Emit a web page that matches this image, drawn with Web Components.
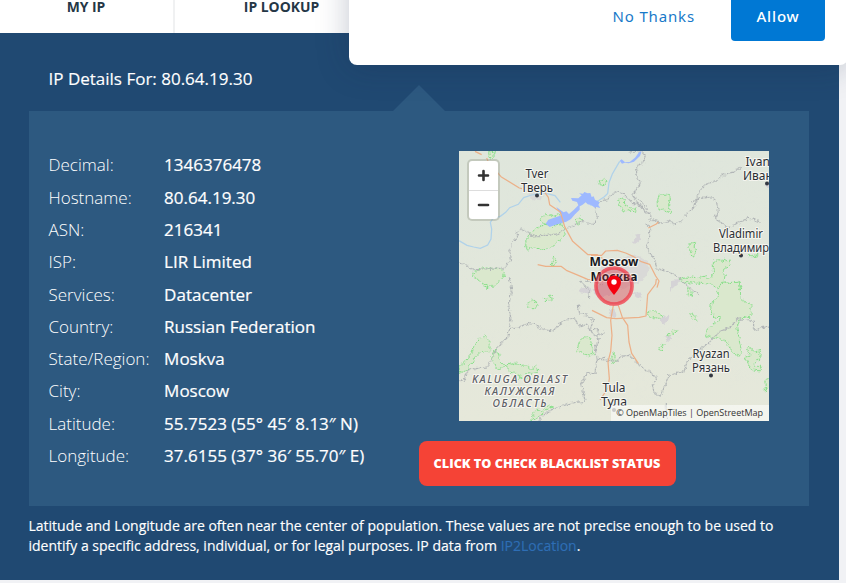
<!DOCTYPE html>
<html lang="en">
<head>
<meta charset="utf-8">
<title>IP Details</title>
<style>
html,body{margin:0;padding:0}
body{width:846px;height:583px;overflow:hidden;background:#f1f2f5;font-family:"Open Sans","Noto Sans",sans-serif}
</style>
</head>
<body>
<ip-page></ip-page>
<script>
const define = (name, html) => customElements.define(name, class extends HTMLElement {
  constructor() {
    super();
    const t = document.createElement('template');
    t.innerHTML = html;
    this.attachShadow({mode: 'open'}).append(t.content.cloneNode(true));
  }
});

define('nav-tabs', `
<style>
:host{display:flex;height:33px;width:839px;background:#fff;color:#253746;font-size:13.9px;font-weight:700;line-height:14px}
.t{box-sizing:border-box;text-align:center;width:175px;padding-right:1px;border-right:2px solid #f0f1f2}
.t.b{width:214px;border:0}
</style>
<div class="t">MY IP</div><div class="t b">IP LOOKUP</div>`);

define('permission-prompt', `
<style>
:host{position:absolute;left:349px;top:-60px;width:499px;height:125px;box-sizing:border-box;background:#fff;border-radius:8px;box-shadow:0 2px 32px rgba(25,40,75,.26);display:flex;justify-content:flex-end;align-items:flex-end;padding:0 23px 24px 0;gap:36px;font-family:"Noto Sans",sans-serif;font-size:15px;color:#1879c9;letter-spacing:.85px}
span{line-height:49px;white-space:nowrap}
b{display:block;width:94px;height:70px;box-sizing:border-box;padding-top:21px;line-height:49px;text-align:center;background:#0078d4;color:#fff;border-radius:4px;font-weight:500}
</style>
<span>No Thanks</span><b>Allow</b>`);

define('detail-row', `
<style>
:host{display:flex;height:32.3px;line-height:32.3px;font-size:17px;white-space:nowrap;color:#fff}
.k{width:115.6px;font-weight:300}
.v{font-weight:450;-webkit-text-stroke:.2px #fff}
</style>
<span class="k"><slot name="k"></slot></span><span class="v"><slot></slot></span>`);

define('check-button', `
<style>
:host{display:flex;box-sizing:border-box;align-items:center;justify-content:center;width:257px;height:45px;padding:0 1px 2px 0;border-radius:8px;background:#f54336;color:#fff;font-size:12.7px;font-weight:800;white-space:nowrap}
</style>
<span><slot></slot></span>`);

define('region-map', `
<style>
:host{display:block;width:310px;height:270px;position:relative;overflow:hidden;background:#e3e8dc}
svg{display:block}
.z{position:absolute;left:8px;top:8px;width:29px;border:2px solid rgba(150,155,140,.38);background-clip:padding-box;background-color:#fff;border-radius:5px}
.z svg:first-child{border-bottom:1px solid #ddd}
.a{position:absolute;right:0;bottom:0;height:16px;line-height:15px;padding:0 6px 0 5px;background:rgba(255,255,255,.55);color:#333;font-size:9px;white-space:nowrap}
.border{fill:none;stroke:#b2b6b7;stroke-width:3.6;stroke-dasharray:8 1.5 3 1.5}
.park{fill:#dae8cd;stroke:#7cde7f;stroke-width:2.7;stroke-dasharray:6 2}
.road{fill:none;stroke:#ecb088;stroke-width:3.7;stroke-linejoin:round}
.river{fill:none;stroke:#b0d2ea;stroke-width:3.8}
.town{fill:#d5d3d6}
text{font-family:"Noto Sans","Open Sans",sans-serif;font-size:12px;font-weight:450;fill:#2c2f35;text-anchor:middle;paint-order:stroke;stroke:#f5f5ef;stroke-width:2.2px;stroke-linejoin:round}
.obl text{font-size:10.5px;font-weight:500;fill:#5d6066}
</style>
<svg width="310" height="270" viewBox="459 151 310 270">
<defs>
<linearGradient id="bg" x2="0" y2="1"><stop offset="0" stop-color="#dfe6dc"/><stop offset=".5" stop-color="#e2e7db"/><stop offset="1" stop-color="#e6e8da"/></linearGradient>
<filter id="wob" color-interpolation-filters="sRGB" filterUnits="userSpaceOnUse" x="450" y="140" width="330" height="290"><feTurbulence type="fractalNoise" baseFrequency=".25" numOctaves="2" seed="4"/><feDisplacementMap in="SourceGraphic" scale="5" xChannelSelector="R" yChannelSelector="G"/></filter>
<filter id="shade" x="0" y="0" width="1" height="1"><feTurbulence type="fractalNoise" baseFrequency=".018 .026" numOctaves="4" seed="9"/><feColorMatrix values="0 0 0 0 .72  0 0 0 0 .77  0 0 0 0 .71  .7 0 0 0 -.26"/></filter>
</defs>
<rect x="459" y="151" width="310" height="270" fill="url(#bg)"/>
<rect x="459" y="151" width="310" height="270" filter="url(#shade)" opacity=".15"/>
<g filter="url(#wob)">
 <g transform="translate(455 148) scale(.33333)">
  <path class="town" d="M218 140l20-10 28 10-10 17-28-4zM500 330l40-10 35 18 8 30-20 30-60 25-60-20-10-40 30-30z" opacity=".7"/><path class="town" d="M545 258l12-3 3 18-14 13-10-5zM650 395l25-5-5 18-25 22zM930 110l18-15v30z" transform="translate(-2 2)"/>
  <path class="park" d="M102 12l20-3-5 14-5 9-10-6zM256 214l14-15 28 5 16-5 8 26-28 10-32-10zM245 240l28-12 22-2 30 6 6 22-6 15-28 22-22 14-48-6-8 8-10-22 12-24zM360 212l18-5 5 10-15 13zM432 100l12-7 12 8-8 8-12 2zM288 350l10-26 5 18-10 14zM57 374l20-15 50 3 22 5-3 20-25 25-30 8-20-24-15-10zM488 155l18-8 4 22 16 10 18 2-2 12-20-8-18 7-10-20zM614 138l26 1 5 18-5 20 10 15-3 5-22-14-16 3-3-20zM707 285l15-2-6 18 8 2-8 24-10-7 2-15-12-4 8-7zM775 341l12-6 30 3 12-2-10 22-18 8 10 12-4 22 16 4 32 0 5 20H790l-22-16-30-2-50-2-15-9 30-9 22 3 22-4 16 6 12-14z M880 320l12 2 18-2-10 6-20 0z"/>
  <path class="border" d="M12 342l18 6 26 18 25-3 45-3 20 3 10-18 14-10-6-23 5-22 20-26-5-12 20-10 26 22 35-2 14 0 30-5 18-12 20-8 22-12 15-5 30 10 14-18-5-18-3-22 18-14 20-3 20-24 28 6 28 30 14 0 10 12 30 23-4 23 12-12 20 13 25-8 18 10 18-8 22-25 20-20 6-25 10-22 20-20 30-10 20-18 30-8 22-14M712 162l20-13 28-4 24 13 6 32-10 20 20 12 18 20 28-16 34-16 38 12M524 12l30-4 17 10-3 22-22 14-2 26 10 30-20 30 8 20 20 20 14 16M570 225l14 13 0 30-10 28 24 38 8 28 34 10 30 14 8 12 28 22 28 20M533 145l25 16 20 24"/>
 </g>
 <g transform="translate(455 284) scale(.33333)">
  <path class="town" d="M370 15l34-8 6 17-8 5-28-5zM412 20l30-25 20 5 10 30-40 10zM462 75l16 0 6 20-14 8zM616 100l27-5-2 14-16 17-10-16zM628 158l20-5 4 10-14 12zM536 24l18 2 6 20-18-6z"/>
  <path class="park" d="M82 0l18 2-5 12zM220 57l10-10 14 6 2 18-14 4-14-4zM268 43l20-10 4 18-12-5-8 8zM12 247l22-13 18-36 18-33 20-9 16 18-2 30-30 2-18 20-18 32-25 10zM110 220l10-22 12 15 0 15 18 18-18 8-12-6zM156 242l30-5 14 10 18-2 12 10 12-14 8 22-14 8-24-2 8 14-30 0 6-12-30-6-12-20zM370 182l14-20 20-2 14 52-28 0-24-12zM230 389l18-14 12 5 20-15 12 5-22 9-14 16-14 10-12 5 4-14zM472 210l8-5 0 30-10 3zM580 83l14-5 12 7 18 9-5 10-18-3-16 1zM704 92l8-5 10 10 4 13-10-5zM638 150l20-14 10 6-12 6-18 10zM612 190l12-10-2 16-10 2zM698 10l8 4 4 22-10 3z"/>
  <path class="park" d="M800-5h54l4 50 30 16 0 35-20 4-12 5-10 25 10 54 6 18-10 16-20-11-4-14-15-20-20-12-18 2-18-5-6-10 6-13 34-25 5-8-22-5-8-20 6-24 18-12-4-20zM872 193l14-4 8 16 22-6-2 28-12 4-4 16 22 0-2 14-32-4-10-28-6-10 18-3zM930 290l14-10 8 20-14 12-7 12z"/>
  <path class="border" d="M163-20l8 40-10 44 7 40-5 29-4 26-30 28-10 20-10 22-14 20-32 5-22 0-14 35-20 6M163 133l25 0 32-15 22 5 24 14 28 4 18-20 25-14 20-6 18 28 20-8 20 30 18 14-14 25 8 35 24 3 32 4 14-15 25-3 18 12 8 12 22 20 24 10 12 22-14 12 6 27 20 8 10-30 14-34 28-6 18-4 8-30 24-24 16-14 20-12 20-22 20-20 32-14 20-23 24 3 12 0 14 8-4 24 60-16M370 65l4 25 22 3 20 18-12 26 26 0-2 17 22-10M450 220l-24 4-6 44-24 0-16 30 10 54-40 5-60 20-30 18-8 20M440 5l-20-12-30-4M634 360l0 45M373-10l28 25 3 26"/>
 </g>
</g>
<g transform="translate(455 148) scale(.33333)">
  <path class="river" d="M12 278l24 14 20 5 20 4 22-10 10-18 2-30-4-20 8-12 22-6 16-12 12-14 26-10 16-20 24-8 36-6 34 8 16 20M406 172l24-14 18-12 10-10 4-32 10-26 22-38"/>
  <path d="M272 227l8-12 24-8 16-5-8-10-8-15 12 9 10 7 8-3 8 8 14-12 14-14-4-10-14-4-4-8 22 1 10-9-8-6 12 1 4-5 10 4 8-1 4 12 6-2 4 10 14 8-4 8 6 9-12-3-4 2-12-8-10-2-6-6-10 8-8 4 0 10-14 14-12 14-14 8-14 4-20 6-16 6z" fill="#9eb9ff"/>
  <path d="M494 38l6-4 10 9 14-1 16-13 12-16 8-3-5 14-18 17-16 5-12-2-8 3z" fill="#9eb9ff"/>
</g>
<g transform="translate(455 148) scale(.33333)" class="road">
 <path d="M80 20l-20-10M95 30l5 12 38 44 55 34 8 2M270 134l10 14 4 22 32 22 13 44 24 44 46 40 28 0 8 6 20 14M408 322l32 0 12-13 35-2 25 8 22 10 25 16 25 8 18 35 10 15-6 20M248 350l24 5 46 0 16 12 36 15 28 12 60 7M580 240l24-12 6-6"/>
</g>
<g transform="translate(455 284) scale(.33333)" class="road">
 <path d="M604-15l-2 15-24 32-5 64-20 4-70 4-28-3-24-12-20-10M475 64l-8 45 4 45-4 48-8 32 4 50-4 28-24 36M490 64l12 36 16 24 4 50 8 34 20 30"/>
</g>
<circle cx="614" cy="286" r="18" fill="#d94a55" fill-opacity=".26" stroke="#f14450" stroke-opacity=".55" stroke-width="3.5"/>
<text x="614" y="266" textLength="49" lengthAdjust="spacingAndGlyphs" style="font-weight:700;fill:#17191d">Moscow</text>
<text x="614" y="281" textLength="47" lengthAdjust="spacingAndGlyphs" style="font-weight:700;fill:#17191d">Москва</text>
<circle cx="614" cy="286" r="18" fill="#d94050" fill-opacity=".24" stroke="#f14450" stroke-opacity=".55" stroke-width="3.5"/>
<path d="M614 295q-7-8-7-12.500a7 7 0 0 1 14 0q0 4.500-7 12.500z" fill="#f5000e"/><circle cx="614" cy="282" r="2.7" fill="#fff"/>
<g fill="#333842"><circle cx="537" cy="195.500" r="2"/><circle cx="767" cy="183.500" r="2"/><circle cx="741" cy="255.500" r="2"/><circle cx="711" cy="375.500" r="2"/></g><circle cx="614" cy="410" r="2" fill="#888"/>
<text x="537" y="178" textLength="23" lengthAdjust="spacingAndGlyphs">Tver</text>
<text x="537" y="192" textLength="32" lengthAdjust="spacingAndGlyphs">Тверь</text>
<text x="745.5" y="166" style="text-anchor:start">Ivanovo</text>
<text x="743" y="180" style="text-anchor:start">Иваново</text>
<text x="741" y="238" textLength="44" lengthAdjust="spacingAndGlyphs">Vladimir</text>
<text x="741" y="252" textLength="56" lengthAdjust="spacingAndGlyphs">Владимир</text>
<text x="711" y="358" textLength="37" lengthAdjust="spacingAndGlyphs">Ryazan</text>
<text x="711" y="372" textLength="38" lengthAdjust="spacingAndGlyphs">Рязань</text>
<text x="614" y="392" textLength="23" lengthAdjust="spacingAndGlyphs">Tula</text>
<text x="614" y="406" textLength="26" lengthAdjust="spacingAndGlyphs">Тула</text>
<g class="obl" font-style="italic"><text x="519.5" y="382.500" textLength="95">KALUGA OBLAST</text>
<text x="519.5" y="394.500" textLength="70">КАЛУЖСКАЯ</text>
<text x="519.5" y="406.500" textLength="54">ОБЛАСТЬ</text></g>
</svg>
<div class="z"><svg width="29" height="29" viewBox="0 0 29 29"><path d="M14.5 10v9M10 14.500h9" stroke="#333" stroke-width="2.600" stroke-linecap="round"/></svg><svg width="29" height="28" viewBox="0 0 29 28"><path d="M10 14h9" stroke="#333" stroke-width="2.600" stroke-linecap="round"/></svg></div>
<div class="a">© OpenMapTiles | OpenStreetMap</div>`);

define('ip-page', `
<style>
:host{display:block;width:846px;height:583px;position:relative;overflow:hidden}
main{box-sizing:border-box;width:839px;height:547px;background:#204972;padding:0 30px 0 29px;color:#fff}
h1{margin:0;height:78px;padding:30px 0 0 19.5px;box-sizing:border-box;font-size:17px;line-height:32px;font-weight:400;-webkit-text-stroke:.15px #fff}
.panel{position:relative;box-sizing:border-box;height:395px;background:#2d5980;display:grid;grid-template-columns:370.5px 1fr;padding:38px 20px 0 19.5px}
.panel::before{content:"";position:absolute;left:364px;top:-26px;border:26px solid transparent;border-top:0;border-bottom-color:#2d5980}
.left{padding-top:.4px}
.right{display:flex;flex-direction:column;gap:20px;padding-top:2px}
region-map{margin-left:40px}
p{margin:0 0 0 -.5px;padding-top:10px;font-size:14px;line-height:20px;white-space:nowrap;-webkit-text-stroke:.15px}
a{color:#2e6eb5}
</style>
<nav-tabs></nav-tabs>
<main>
<h1>IP Details For: 80.64.19.30</h1>
<section class="panel">
<div class="left">
<detail-row><span slot="k">Decimal:</span>1346376478</detail-row>
<detail-row><span slot="k">Hostname:</span>80.64.19.30</detail-row>
<detail-row><span slot="k">ASN:</span>216341</detail-row>
<detail-row><span slot="k">ISP:</span>LIR Limited</detail-row>
<detail-row><span slot="k">Services:</span>Datacenter</detail-row>
<detail-row><span slot="k">Country:</span>Russian Federation</detail-row>
<detail-row><span slot="k">State/Region:</span>Moskva</detail-row>
<detail-row><span slot="k">City:</span>Moscow</detail-row>
<detail-row><span slot="k">Latitude:</span>55.7523 (55° 45′ 8.13″ N)</detail-row>
<detail-row><span slot="k">Longitude:</span>37.6155 (37° 36′ 55.70″ E)</detail-row>
</div>
<div class="right"><region-map></region-map><check-button>CLICK TO CHECK BLACKLIST STATUS</check-button></div>
</section>
<p>Latitude and Longitude are often near the center of population. These values are not precise enough to be used to<br>identify a specific address, individual, or for legal purposes. IP data from <a>IP2Location</a>.</p>
</main>
<permission-prompt></permission-prompt>`);
</script>
</body>
</html>
